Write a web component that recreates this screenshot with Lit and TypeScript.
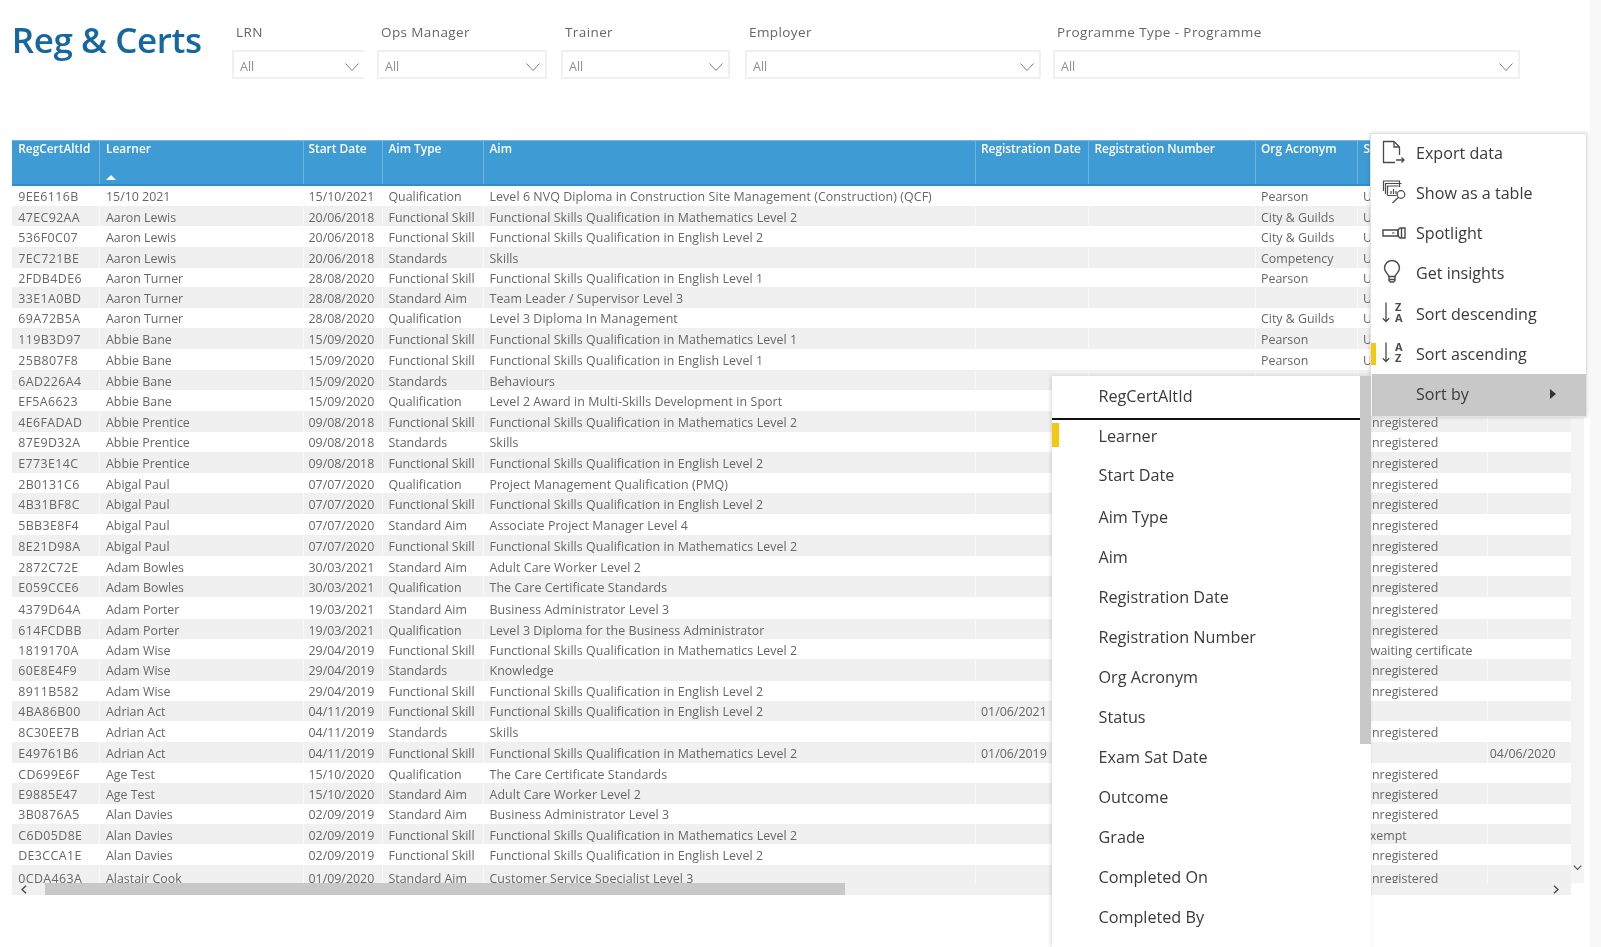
import { LitElement, html, css, svg } from 'lit';
import { customElement } from 'lit/decorators.js';

const FS_M2 = 'Functional Skills Qualification in Mathematics Level 2';
const FS_M1 = 'Functional Skills Qualification in Mathematics Level 1';
const FS_E2 = 'Functional Skills Qualification in English Level 2';
const FS_E1 = 'Functional Skills Qualification in English Level 1';
const FSK = 'Functional Skill';
const Q = 'Qualification';
const SA = 'Standard Aim';
const ST = 'Standards';
const UN = 'Unregistered';
const CG = 'City & Guilds';

// id, learner, start, type, aim, regDate, org, status, examDate, text centre y
type Row = [string, string, string, string, string, string, string, string, string, number];

const rows: Row[] = [
  ['9EE6116B', '15/10 2021', '15/10/2021', Q, 'Level 6 NVQ Diploma in Construction Site Management (Construction) (QCF)', '', 'Pearson', UN, '', 196.7],
  ['47EC92AA', 'Aaron Lewis', '20/06/2018', FSK, FS_M2, '', CG, UN, '', 217.7],
  ['536F0C07', 'Aaron Lewis', '20/06/2018', FSK, FS_E2, '', CG, UN, '', 236.7],
  ['7EC721BE', 'Aaron Lewis', '20/06/2018', ST, 'Skills', '', 'Competency', UN, '', 259],
  ['2FDB4DE6', 'Aaron Turner', '28/08/2020', FSK, FS_E1, '', 'Pearson', UN, '', 278.3],
  ['33E1A0BD', 'Aaron Turner', '28/08/2020', SA, 'Team Leader / Supervisor Level 3', '', '', UN, '', 298],
  ['69A72B5A', 'Aaron Turner', '28/08/2020', Q, 'Level 3 Diploma In Management', '', CG, UN, '', 318.6],
  ['119B3D97', 'Abbie Bane', '15/09/2020', FSK, FS_M1, '', 'Pearson', UN, '', 339],
  ['25B807F8', 'Abbie Bane', '15/09/2020', FSK, FS_E1, '', 'Pearson', UN, '', 360.4],
  ['6AD226A4', 'Abbie Bane', '15/09/2020', ST, 'Behaviours', '', '', UN, '', 380.8],
  ['EF5A6623', 'Abbie Bane', '15/09/2020', Q, 'Level 2 Award in Multi-Skills Development in Sport', '', '', UN, '', 401.3],
  ['4E6FADAD', 'Abbie Prentice', '09/08/2018', FSK, FS_M2, '', '', UN, '', 421.7],
  ['87E9D32A', 'Abbie Prentice', '09/08/2018', ST, 'Skills', '', '', UN, '', 443],
  ['E773E14C', 'Abbie Prentice', '09/08/2018', FSK, FS_E2, '', '', UN, '', 463.5],
  ['2B0131C6', 'Abigal Paul', '07/07/2020', Q, 'Project Management Qualification (PMQ)', '', '', UN, '', 484],
  ['4B31BF8C', 'Abigal Paul', '07/07/2020', FSK, FS_E2, '', '', UN, '', 504.4],
  ['5BB3E8F4', 'Abigal Paul', '07/07/2020', SA, 'Associate Project Manager Level 4', '', '', UN, '', 525.8],
  ['8E21D98A', 'Abigal Paul', '07/07/2020', FSK, FS_M2, '', '', UN, '', 546.2],
  ['2872C72E', 'Adam Bowles', '30/03/2021', SA, 'Adult Care Worker Level 2', '', '', UN, '', 566.7],
  ['E059CCE6', 'Adam Bowles', '30/03/2021', Q, 'The Care Certificate Standards', '', '', UN, '', 588],
  ['4379D64A', 'Adam Porter', '19/03/2021', SA, 'Business Administrator Level 3', '', '', UN, '', 608.5],
  ['614FCDBB', 'Adam Porter', '19/03/2021', Q, 'Level 3 Diploma for the Business Administrator', '', '', UN, '', 631],
  ['1819170A', 'Adam Wise', '29/04/2019', FSK, FS_M2, '', '', 'Awaiting certificate', '', 649.4],
  ['60E8E4F9', 'Adam Wise', '29/04/2019', ST, 'Knowledge', '', '', UN, '', 670.8],
  ['8911B582', 'Adam Wise', '29/04/2019', FSK, FS_E2, '', '', UN, '', 692.2],
  ['4BA86B00', 'Adrian Act', '04/11/2019', FSK, FS_E2, '01/06/2021', '', '', '', 711.6],
  ['8C30EE7B', 'Adrian Act', '04/11/2019', ST, 'Skills', '', '', UN, '', 732],
  ['E49761B6', 'Adrian Act', '04/11/2019', FSK, FS_M2, '01/06/2019', '', '', '04/06/2020', 753.5],
  ['CD699E6F', 'Age Test', '15/10/2020', Q, 'The Care Certificate Standards', '', '', UN, '', 774],
  ['E9885E47', 'Age Test', '15/10/2020', SA, 'Adult Care Worker Level 2', '', '', UN, '', 794.3],
  ['3B0876A5', 'Alan Davies', '02/09/2019', SA, 'Business Administrator Level 3', '', '', UN, '', 814.8],
  ['C6D05D8E', 'Alan Davies', '02/09/2019', FSK, FS_M2, '', '', 'Exempt', '', 835],
  ['DE3CCA1E', 'Alan Davies', '02/09/2019', FSK, FS_E2, '', '', UN, '', 855.6],
  ['0CDA463A', 'Alastair Cook', '01/09/2020', SA, 'Customer Service Specialist Level 3', '', '', UN, '', 877],
];

// band heights come from the midpoints between text centres
const BODY_TOP = 185.5;
function rowHeight(i: number): number {
  const c = rows[i][9];
  const top = i === 0 ? BODY_TOP : (rows[i - 1][9] + c) / 2 - 0.8;
  const bottom = i === rows.length - 1 ? c + 12 : (c + rows[i + 1][9]) / 2 - 0.8;
  return bottom - top;
}

const slicers = [
  { label: 'LRN', slot: 145, box: 132, open: true },
  { label: 'Ops Manager', slot: 184, box: 170, open: false },
  { label: 'Trainer', slot: 184, box: 169, open: false },
  { label: 'Employer', slot: 308, box: 296, open: false },
  { label: 'Programme Type - Programme', slot: 467, box: 467, open: false },
];

const headers = ['RegCertAltId', 'Learner', 'Start Date', 'Aim Type', 'Aim', 'Registration Date', 'Registration Number', 'Org Acronym', 'Status', 'Exam Sat Date'];

const sortFields = ['RegCertAltId', 'Learner', 'Start Date', 'Aim Type', 'Aim', 'Registration Date', 'Registration Number', 'Org Acronym', 'Status', 'Exam Sat Date', 'Outcome', 'Grade', 'Completed On', 'Completed By'];

const stroke = '#4a4a4a';

const icons = {
  export: svg`<svg width="26" height="26" viewBox="0 0 26 26" fill="none" stroke=${stroke} stroke-width="1.3">
    <path d="M12 1.500H1.500v21H13M12 1.500l5.500 5.500V15M12 1.500V7h5.500"/><path d="M14 20h8M19.500 17.500 22 20l-2.500 2.500"/></svg>`,
  table: svg`<svg width="26" height="26" viewBox="0 0 26 26" fill="none" stroke=${stroke} stroke-width="1.2">
    <path d="M1.500 11V1h16v6"/><path d="M3.500 14V3.500h16"/><path d="M5.500 15.500V6h11M5.500 15.500h9"/>
    <path d="M9 14v-3M11.500 14V9M14 14v-3"/><circle cx="19" cy="14.500" r="3.800"/><path d="M16.200 17.500 10.500 23"/></svg>`,
  spot: svg`<svg width="26" height="26" viewBox="0 0 26 26" fill="none" stroke=${stroke} stroke-width="1.4">
    <path d="M1 10h15v6H1z"/><path d="M16 10l2-2h5v10h-5l-2-2z"/><path d="M19.500 8v10"/><path d="M10 13h2.500" stroke-width="1"/></svg>`,
  bulb: svg`<svg width="26" height="26" viewBox="0 0 26 26" fill="none" stroke=${stroke} stroke-width="1.4">
    <path d="M7 16.500C6 13.500 2.500 12 2.500 8a7.500 7.500 0 0 1 15 0c0 4-3.500 5.500-4.500 8.500z"/><path d="M7 16.500v4l1.500 1.500h3l1.500-1.500v-4M7 19.500h6"/></svg>`,
  desc: svg`<svg width="26" height="26" viewBox="0 0 26 26" fill="none" stroke=${stroke} stroke-width="1.3">
    <path d="M4 1.500v19M.8 17.300 4 20.500l3.200-3.200"/>
    <text x="13" y="10" font-size="11" font-weight="700" fill=${stroke} stroke="none">Z</text>
    <text x="13" y="21" font-size="11" font-weight="700" fill=${stroke} stroke="none">A</text></svg>`,
  asc: svg`<svg width="26" height="26" viewBox="0 0 26 26" fill="none" stroke=${stroke} stroke-width="1.3">
    <path d="M4 1.500v19M.8 17.300 4 20.500l3.200-3.200"/>
    <text x="13" y="10" font-size="11" font-weight="700" fill=${stroke} stroke="none">A</text>
    <text x="13" y="20.500" font-size="11" font-weight="700" fill=${stroke} stroke="none">Z</text></svg>`,
};

const chevron = html`<svg class="chev" width="14" height="8" viewBox="0 0 14 8" fill="none" stroke="#7f7f7f" stroke-width="1"><path d="M.5.500 7 7.500 13.500.500"/></svg>`;

@customElement('app-root')
export class AppRoot extends LitElement {
  static styles = css`
    :host {
      display: block;
      position: relative;
      width: 1601px;
      height: 947px;
      overflow: hidden;
      background: #fff;
      font-family: "Open Sans", "Noto Sans", sans-serif;
      color: #666;
      filter: blur(0.4px);
    }
    .page {
      height: 947px;
      display: flex;
      flex-direction: column;
      padding-left: 11.7px;
      box-sizing: border-box;
    }
    .edge {
      position: absolute;
      top: 0;
      right: 0;
      bottom: 0;
      width: 11px;
      background: #f8f8f8;
    }

    .top { display: flex; height: 139.5px; box-sizing: border-box; padding-top: 20px; }
    .title {
      width: 220.3px;
      font-size: 35px;
      line-height: 40px;
      font-weight: 600;
      color: #14689f;
      letter-spacing: -0.4px;
    }
    .slicer-label {
      font-size: 13.5px;
      line-height: 24px;
      margin-bottom: 6px;
      padding-left: 4px;
      color: #666;
      letter-spacing: 0.4px;
    }
    .slicer-box {
      height: 29px;
      box-sizing: border-box;
      border: 2px solid #f0f0f0;
      display: flex;
      align-items: center;
      justify-content: space-between;
      padding: 3px 5px 0 6px;
      font-size: 12.5px;
      color: #8f8f8f;
    }
    .slicer-box.open { border-right: none; }
    .chev { margin-top: 1px; }

    .table-line { display: flex; width: 1572.3px; height: 743.5px; }
    .table { width: 1559.3px; height: 743.5px; overflow: hidden; font-size: 12.4px; }
    .cols {
      display: grid;
      grid-template-columns: 87.8px 203.5px 79.5px 100.5px 492px 113px 167px 102px 130px 84.5px;
    }
    .thead {
      height: 46px;
      box-sizing: border-box;
      background: #3f9bd3;
      border-top: 1px solid #79b6dc;
      border-bottom: 2px solid #2a8fd0;
      color: #fff;
      font-size: 11.9px;
      font-weight: 600;
    }
    .th {
      position: relative;
      padding: 0.5px 0 0 5.5px;
      line-height: 14px;
      border-left: 1px solid #74b5de;
      white-space: nowrap;
      overflow: hidden;
    }
    .th:first-child { border-left: none; padding-left: 6.5px; }
    .th:nth-child(3) { padding-left: 4.5px; }
    .th:nth-child(4), .th:nth-child(6), .th:nth-child(8) { padding-left: 5px; }
    .sort-mark {
      position: absolute;
      left: 6px;
      bottom: 4px;
      width: 0;
      height: 0;
      border: 5px solid transparent;
      border-top: none;
      border-bottom: 5px solid #fff;
    }
    .tr { background: #fff; }
    .tr:nth-child(even) { background: #f0f0f0; }
    .td {
      padding-left: 5.5px;
      padding-top: 2px;
      box-sizing: border-box;
      white-space: nowrap;
      overflow: hidden;
      border-left: 1px solid rgba(255, 255, 255, 0.55);
      display: flex;
      align-items: center;
    }
    .td:first-child { border-left: none; padding-left: 6.5px; letter-spacing: 0.4px; }
    .td:nth-child(3) { padding-left: 4.5px; }
    .td:nth-child(4), .td:nth-child(6), .td:nth-child(8), .td:nth-child(9) { padding-left: 5px; }
    .td:nth-child(5) { letter-spacing: 0.08px; }
    .td.num { justify-content: flex-end; padding-right: 16px; padding-left: 0; }

    .vbar {
      position: relative;
      width: 13px;
      background: #f4f4f4;
    }
    .vbar svg { position: absolute; left: 2px; top: 725px; }

    .hbar {
      display: flex;
      align-items: center;
      justify-content: space-between;
      position: relative;
      width: 1559.3px;
      height: 12px;
      background: #f0f0f0;
    }
    .hthumb {
      position: absolute;
      left: 33.3px;
      top: 0;
      width: 800px;
      height: 12px;
      background: #c8c8c8;
    }
    .harrow { margin: 0 9px; }
    .harrow.right { margin-right: 12px; }

    .menu {
      position: absolute;
      left: 1370px;
      top: 133px;
      width: 217px;
      box-sizing: border-box;
      background: #fff;
      border: 1px solid #e2e2e2;
      box-shadow: 0 0 4px rgba(0, 0, 0, 0.18);
      font-size: 16.1px;
      color: #3a3a3a;
    }
    .item {
      position: relative;
      height: 40px;
      display: flex;
      align-items: center;
      padding-left: 11px;
      box-sizing: border-box;
    }
    .item.upper { padding-bottom: 2px; }
    .item .ico { width: 26px; height: 26px; margin-right: 8px; flex: none; }
    .item.active {
      height: 42px;
      margin-left: 1px;
      padding-left: 44px;
      padding-bottom: 2px;
      background: #c8c8c8;
      justify-content: space-between;
    }
    .caret {
      width: 0;
      height: 0;
      margin-right: 30px;
      border: 5px solid transparent;
      border-right: none;
      border-left: 6px solid #333;
    }
    .mark {
      position: absolute;
      left: 0;
      top: 9px;
      width: 5px;
      height: 22px;
      background: #f2c811;
    }
    .submenu {
      position: absolute;
      left: 1052px;
      top: 376px;
      bottom: 0;
      width: 319px;
      display: flex;
      background: #fff;
      box-shadow: -1px 0 4px rgba(0, 0, 0, 0.16);
      font-size: 16.2px;
      color: #3a3a3a;
    }
    .sublist { flex: 1; }
    .subitem {
      position: relative;
      height: 40px;
      box-sizing: border-box;
      padding-left: 46.5px;
      padding-top: 1px;
      display: flex;
      align-items: center;
    }
    .subitem.top-row { padding-top: 0; }
    .subitem.upper { padding-top: 0; padding-bottom: 2px; }
    .subitem.first::after {
      content: "";
      position: absolute;
      left: 0;
      right: 0;
      bottom: -3.500px;
      height: 2px;
      background: #111;
    }
    .subitem .mark { width: 6.500px; top: 7px; height: 24px; }
    .subscroll { width: 11.500px; }
    .subthumb { height: 368px; background: #c8c8c8; }
  `;

  render() {
    return html`
      <div class="page">
        <div class="top">
          <div class="title">Reg &amp; Certs</div>
          ${slicers.map(s => html`
            <div style="width:${s.slot}px">
              <div class="slicer-label">${s.label}</div>
              <div class="slicer-box ${s.open ? 'open' : ''}" style="width:${s.box}px"><span>All</span>${chevron}</div>
            </div>`)}
        </div>
        <div class="table-line">
          <div class="table">
            <div class="thead cols">
              ${headers.map((h, i) => html`<div class="th">${h}${i === 1 ? html`<span class="sort-mark"></span>` : ''}</div>`)}
            </div>
            <div>
              ${rows.map((r, i) => html`
                <div class="tr cols" style="height:${rowHeight(i).toFixed(1)}px">
                  <div class="td">${r[0]}</div>
                  <div class="td">${r[1]}</div>
                  <div class="td">${r[2]}</div>
                  <div class="td">${r[3]}</div>
                  <div class="td">${r[4]}</div>
                  <div class="td">${r[5]}</div>
                  <div class="td"></div>
                  <div class="td">${r[6]}</div>
                  <div class="td">${r[7]}</div>
                  <div class="td num">${r[8]}</div>
                </div>`)}
            </div>
          </div>
          <div class="vbar">
            <svg width="9" height="6" viewBox="0 0 9 6" fill="none" stroke="#555" stroke-width="1.2"><path d="M.7.700 4.500 4.500 8.300.700"/></svg>
          </div>
        </div>
        <div class="hbar">
          <div class="hthumb"></div>
          <svg class="harrow" width="6" height="9" viewBox="0 0 6 9" fill="none" stroke="#444" stroke-width="1.3"><path d="M5 .700 1 4.500 5 8.300"/></svg>
          <svg class="harrow right" width="6" height="9" viewBox="0 0 6 9" fill="none" stroke="#444" stroke-width="1.3"><path d="M1 .700 5 4.500 1 8.300"/></svg>
        </div>
      </div>
      <div class="edge"></div>

      <div class="menu">
        <div class="item upper"><span class="ico">${icons.export}</span>Export data</div>
        <div class="item upper"><span class="ico">${icons.table}</span>Show as a table</div>
        <div class="item upper"><span class="ico">${icons.spot}</span>Spotlight</div>
        <div class="item upper"><span class="ico">${icons.bulb}</span>Get insights</div>
        <div class="item"><span class="ico">${icons.desc}</span>Sort descending</div>
        <div class="item"><span class="mark"></span><span class="ico">${icons.asc}</span>Sort ascending</div>
        <div class="item active"><span>Sort by</span><span class="caret"></span></div>
      </div>

      <div class="submenu">
        <div class="sublist">
          ${sortFields.map((f, i) => html`
            <div class="subitem ${i === 0 ? 'first' : ''} ${i < 2 ? 'top-row' : ''} ${i === 2 ? 'upper' : ''}">${i === 1 ? html`<span class="mark"></span>` : ''}${f}</div>`)}
        </div>
        <div class="subscroll"><div class="subthumb"></div></div>
      </div>
    `;
  }
}
